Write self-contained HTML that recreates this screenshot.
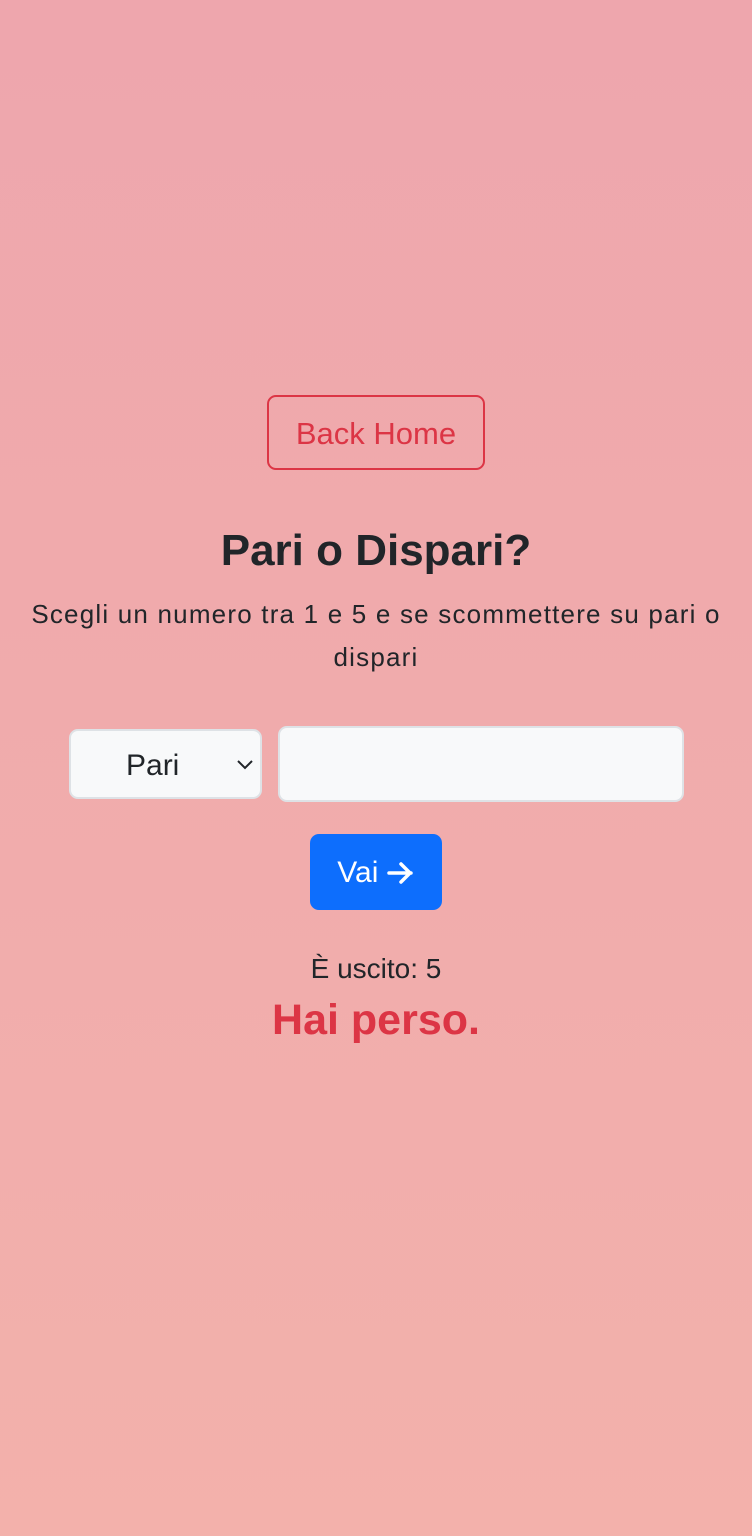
<!DOCTYPE html>
<html><head><meta charset="utf-8"><style>
html,body{margin:0;padding:0}
body{width:752px;height:1536px;background:linear-gradient(#eea6ad,#f3b1ab);font-family:"Liberation Sans",sans-serif;color:#212529;position:relative;overflow:hidden}
.a{position:absolute}
.c{left:0;width:752px;text-align:center}
</style></head><body>
<div class="a" style="left:267px;top:395px;width:214px;height:71px;border:2px solid #dc3545;border-radius:9px;color:#dc3545;font-size:31px;line-height:74px;text-align:center">Back Home</div>
<div class="a c" style="top:521px;font-size:44px;font-weight:bold;line-height:60px">Pari o Dispari?</div>
<div class="a" style="left:20px;width:712px;top:593px;font-size:26px;letter-spacing:1.2px;line-height:43px;text-align:center">Scegli un numero tra 1 e 5 e se scommettere su pari o dispari</div>
<div class="a" style="left:69px;top:729px;width:189px;height:66px;background:#f8f9fa;border:2px solid #dee2e6;border-radius:9px;font-size:30px;line-height:70px">
<span class="a" style="left:55px">Pari</span>
<svg class="a" style="left:165px;top:27px" width="18" height="12" viewBox="0 0 18 12"><path d="M2 3l7 7 7-7" stroke="#212529" stroke-width="2" fill="none"/></svg></div>
<div class="a" style="left:278px;top:726px;width:402px;height:72px;background:#f8f9fa;border:2px solid #dee2e6;border-radius:9px"></div>
<div class="a" style="left:310px;top:834px;width:132px;height:76px;background:#0d6efd;border-radius:9px;color:#fff;font-size:30px;line-height:78px;text-align:center">Vai <svg width="28" height="24" viewBox="0 0 28 24" style="vertical-align:-3px"><path d="M2 12h22M14 3l9 9-9 9" stroke="#fff" stroke-width="3.5" fill="none" stroke-linecap="round" stroke-linejoin="round"/></svg></div>
<div class="a c" style="top:951px;font-size:28px;line-height:36px">È uscito: 5</div>
<div class="a c" style="top:992px;font-size:43px;line-height:56px;color:#dc3545;font-weight:bold">Hai perso.</div>
</body></html>
